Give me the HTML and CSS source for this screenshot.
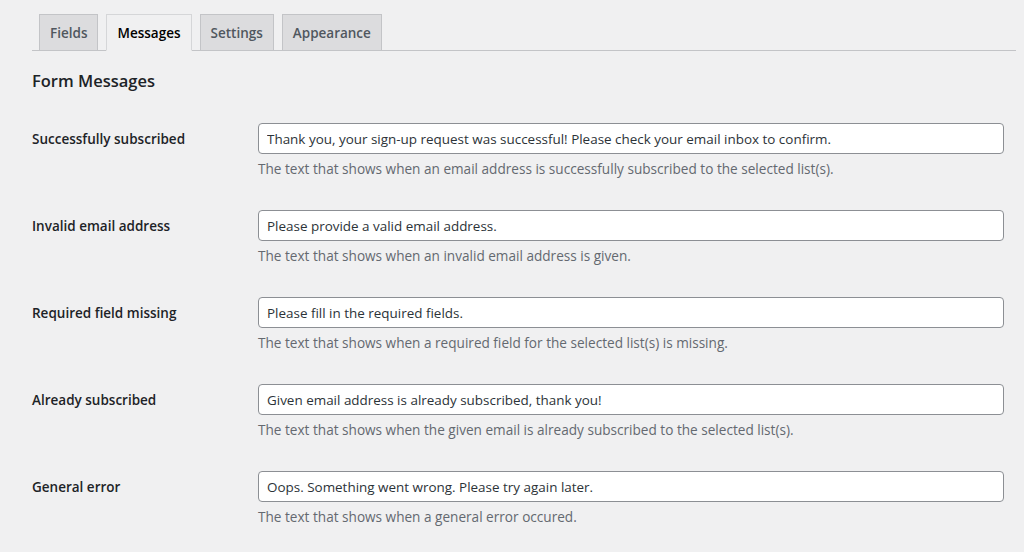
FILE: index.html
```html
<!DOCTYPE html>
<html lang="en">
<head>
<meta charset="utf-8">
<title>Form Messages</title>
<link rel="stylesheet" href="styles.css">
</head>
<body>
<div class="wrap">
  <nav class="tabs">
    <a class="tab">Fields</a>
    <a class="tab active">Messages</a>
    <a class="tab">Settings</a>
    <a class="tab">Appearance</a>
  </nav>
  <h2 class="heading">Form Messages</h2>
  <div class="rows">
    <div class="row">
      <label class="label">Successfully subscribed</label>
      <div class="field">
        <input class="input" type="text" value="Thank you, your sign-up request was successful! Please check your email inbox to confirm.">
        <p class="desc">The text that shows when an email address is successfully subscribed to the selected list(s).</p>
      </div>
    </div>
    <div class="row">
      <label class="label">Invalid email address</label>
      <div class="field">
        <input class="input" type="text" value="Please provide a valid email address.">
        <p class="desc">The text that shows when an invalid email address is given.</p>
      </div>
    </div>
    <div class="row">
      <label class="label">Required field missing</label>
      <div class="field">
        <input class="input" type="text" value="Please fill in the required fields.">
        <p class="desc">The text that shows when a required field for the selected list(s) is missing.</p>
      </div>
    </div>
    <div class="row">
      <label class="label">Already subscribed</label>
      <div class="field">
        <input class="input" type="text" value="Given email address is already subscribed, thank you!">
        <p class="desc">The text that shows when the given email is already subscribed to the selected list(s).</p>
      </div>
    </div>
    <div class="row">
      <label class="label">General error</label>
      <div class="field">
        <input class="input" type="text" value="Oops. Something went wrong. Please try again later.">
        <p class="desc">The text that shows when a general error occured.</p>
      </div>
    </div>
  </div>
</div>
</body>
</html>
```

FILE: styles.css
```css
html, body {
  margin: 0;
  padding: 0;
  background: #f0f0f1;
}
body {
  font-family: "Open Sans", "Noto Sans", sans-serif;
  font-size: 13.6px;
  color: #1d2327;
}
.wrap {
  padding: 14px 8px 0 32px;
}
.tabs {
  display: flex;
  border-bottom: 1px solid #c3c4c7;
  height: 36px;
}
.tab {
  display: block;
  box-sizing: border-box;
  height: 37px;
  margin-left: 7px;
  padding: 6px 10px 4px;
  border: 1px solid #c3c4c7;
  background: #dcdcde;
  color: #50575e;
  font-size: 13.5px;
  font-weight: 600;
  line-height: 24px;
  white-space: nowrap;
}
.tab + .tab {
  margin-left: 8px;
}
.tab.active {
  background: #f0f0f1;
  color: #000;
  border-color: #d5d6d8;
  border-bottom-color: #f0f0f1;
}
.heading {
  margin: 18px 0 0;
  font-size: 16.5px;
  font-weight: 600;
  line-height: 23px;
  color: #1d2327;
}
.rows {
  display: flex;
  flex-direction: column;
  gap: 31px;
  margin-top: 31px;
  padding-right: 12px;
}
.row {
  display: grid;
  grid-template-columns: 226px 1fr;
}
.label {
  padding-top: 7px;
  font-weight: 600;
  font-size: 13.5px;
  line-height: 19px;
  color: #1d2327;
}
.field {
  display: flex;
  flex-direction: column;
}
.input {
  box-sizing: border-box;
  width: 100%;
  height: 31px;
  margin: 0;
  padding: 0 8px;
  border: 1px solid #8c8f94;
  border-radius: 4px;
  background: #fff;
  font-family: "Open Sans", "Noto Sans", sans-serif;
  font-size: 13.45px;
  color: #2c3338;
  outline: none;
}
.desc {
  margin: 4px 0 0;
  font-size: 13.6px;
  line-height: 21px;
  color: #646970;
}
```
